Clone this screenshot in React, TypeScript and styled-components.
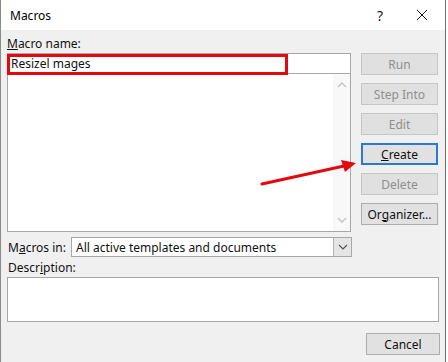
import React from "react";
import styled, { createGlobalStyle } from "styled-components";

const GlobalStyle = createGlobalStyle`
  html, body {
    margin: 0;
    padding: 0;
    background: #ffffff;
  }
  body {
    font-family: "Noto Sans", "Open Sans", sans-serif;
    font-size: 12px;
    color: #111;
  }
`;

const buttons = [
  { label: "Run", disabled: true },
  { label: "Step Into", disabled: true },
  { label: "Edit", disabled: true },
  { label: "Create", key: "C", isDefault: true },
  { label: "Delete", disabled: true },
  { label: "Organizer...", key: "g" },
];

const App = () => {
  return (
    <Page>
      <GlobalStyle />
      <Dialog>
        <TitleBar>
          <Title>Macros</Title>
          <TitleControls>
            <Help>?</Help>
            <CloseIcon width="12" height="12" viewBox="0 0 12 12">
              <path d="M1 1 L11 11 M11 1 L1 11" stroke="#1a1a1a" strokeWidth="1" />
            </CloseIcon>
          </TitleControls>
        </TitleBar>

        <Body>
          <TopArea>
            <LeftCol>
              <Label>
                <u>M</u>acro name:
              </Label>
              <NameField>
                Resizel mages
                <RedBox />
              </NameField>
              <ListBox>
                <ScrollBar>
                  <Chevron width="10" height="6" viewBox="0 0 10 6">
                    <path d="M1 5 L5 1 L9 5" fill="none" stroke="#c2c2c2" strokeWidth="1.3" />
                  </Chevron>
                  <Chevron width="10" height="6" viewBox="0 0 10 6">
                    <path d="M1 1 L5 5 L9 1" fill="none" stroke="#c2c2c2" strokeWidth="1.3" />
                  </Chevron>
                </ScrollBar>
              </ListBox>
            </LeftCol>

            <ButtonCol>
              {buttons.map((b) => (
                <Button key={b.label} $disabled={b.disabled} $isDefault={b.isDefault}>
                  {b.key ? underline(b.label, b.key) : b.label}
                </Button>
              ))}
            </ButtonCol>
          </TopArea>

          <MacrosRow>
            <InlineLabel>
              M<u>a</u>cros in:
            </InlineLabel>
            <Select>
              <SelectText>All active templates and documents</SelectText>
              <DropButton>
                <svg width="10" height="6" viewBox="0 0 10 6">
                  <path d="M1 1 L5 5 L9 1" fill="none" stroke="#555" strokeWidth="1.2" />
                </svg>
              </DropButton>
            </Select>
          </MacrosRow>

          <DescLabel>
            Descr<u>i</u>ption:
          </DescLabel>
          <DescBox />

          <Footer>
            <Button $width={74}>Cancel</Button>
          </Footer>

          <Arrow width="448" height="362" viewBox="0 0 448 362">
            <line x1="262" y1="184" x2="344" y2="166" stroke="#e4080f" strokeWidth="3" strokeLinecap="round" />
            <polygon points="356,163 341,160 345,172" fill="#e4080f" />
          </Arrow>
        </Body>
      </Dialog>
      <OtherWindow />
    </Page>
  );
};

const underline = (text: string, key: string) => {
  const i = text.indexOf(key);
  return (
    <>
      {text.slice(0, i)}
      <u>{key}</u>
      {text.slice(i + 1)}
    </>
  );
};

export default App;

const Page = styled.div`
  width: 448px;
  height: 362px;
  display: flex;
  overflow: hidden;
`;

const Dialog = styled.div`
  width: 444px;
  height: 362px;
  display: flex;
  flex-direction: column;
  border-left: 1px solid #8a8a8a;
  border-right: 1px solid #6f6f6f;
  position: relative;
`;

const TitleBar = styled.div`
  height: 30px;
  background: #ffffff;
  display: flex;
  align-items: center;
  justify-content: space-between;
  padding-left: 9px;
`;

const Title = styled.div`
  font-size: 12px;
  color: #000;
`;

const TitleControls = styled.div`
  display: flex;
  align-items: center;
  gap: 33px;
  padding-right: 17px;
`;

const Help = styled.div`
  font-size: 14px;
  color: #1a1a1a;
`;

const CloseIcon = styled.svg`
  display: block;
`;

const Body = styled.div`
  flex: 1;
  background: #f0f0f0;
  padding: 0 5px 0 6px;
  display: flex;
  flex-direction: column;
`;

const TopArea = styled.div`
  display: flex;
  gap: 10px;
`;

const LeftCol = styled.div`
  width: 344px;
  display: flex;
  flex-direction: column;
`;

const Label = styled.div`
  height: 23px;
  display: flex;
  align-items: flex-end;
  line-height: 16px;
  padding-bottom: 1px;
  box-sizing: border-box;
`;

const NameField = styled.div`
  position: relative;
  height: 20px;
  box-sizing: border-box;
  border: 1px solid #a8a8a8;
  border-bottom: none;
  background: #fff;
  padding-left: 3px;
  line-height: 19px;
`;

const RedBox = styled.div`
  position: absolute;
  left: -1px;
  top: 0px;
  width: 281px;
  height: 21px;
  box-sizing: border-box;
  border: 3px solid #e4080f;
`;

const ListBox = styled.div`
  height: 159px;
  box-sizing: border-box;
  border: 1px solid #a8a8a8;
  background: #fff;
  display: flex;
  justify-content: flex-end;
`;

const ScrollBar = styled.div`
  width: 17px;
  background: #f8f8f8;
  display: flex;
  flex-direction: column;
  justify-content: space-between;
  align-items: center;
  padding: 8px 0;
`;

const Chevron = styled.svg`
  display: block;
`;

const ButtonCol = styled.div`
  display: flex;
  flex-direction: column;
  gap: 8px;
  padding-top: 23px;
`;

const Button = styled.div<{ $disabled?: boolean; $isDefault?: boolean; $width?: number }>`
  width: ${(p) => p.$width ?? 77}px;
  height: 22px;
  box-sizing: border-box;
  display: flex;
  align-items: center;
  justify-content: center;
  background: ${(p) => (p.$disabled ? "#e0e0e0" : "#e1e1e1")};
  border: ${(p) => (p.$isDefault ? "2px solid #2a7ad2" : p.$disabled ? "1px solid #c6c6c6" : "1px solid #adadad")};
  color: ${(p) => (p.$disabled ? "#8f8f8f" : "#111")};
`;

const MacrosRow = styled.div`
  display: flex;
  align-items: center;
  margin-top: 5px;
  height: 20px;
`;

const InlineLabel = styled.div`
  width: 63px;
  padding-left: 1px;
`;

const Select = styled.div`
  width: 281px;
  height: 20px;
  box-sizing: border-box;
  border: 1px solid #a8a8a8;
  background: #fff;
  display: flex;
  align-items: center;
`;

const SelectText = styled.div`
  flex: 1;
  padding-left: 4px;
`;

const DropButton = styled.div`
  width: 17px;
  height: 18px;
  background: #e5e5e5;
  border-left: 1px solid #b4b4b4;
  display: flex;
  align-items: center;
  justify-content: center;
`;

const DescLabel = styled.div`
  height: 20px;
  display: flex;
  align-items: center;
  padding-left: 1px;
`;

const DescBox = styled.div`
  width: 432px;
  height: 45px;
  box-sizing: border-box;
  border: 1px solid #a8a8a8;
  background: #fff;
`;

const Footer = styled.div`
  display: flex;
  justify-content: flex-end;
  margin-top: 11px;
`;

const Arrow = styled.svg`
  position: absolute;
  left: -1px;
  top: 0;
  pointer-events: none;
`;

const OtherWindow = styled.div`
  flex: 1;
  background: #ffffff;
`;
